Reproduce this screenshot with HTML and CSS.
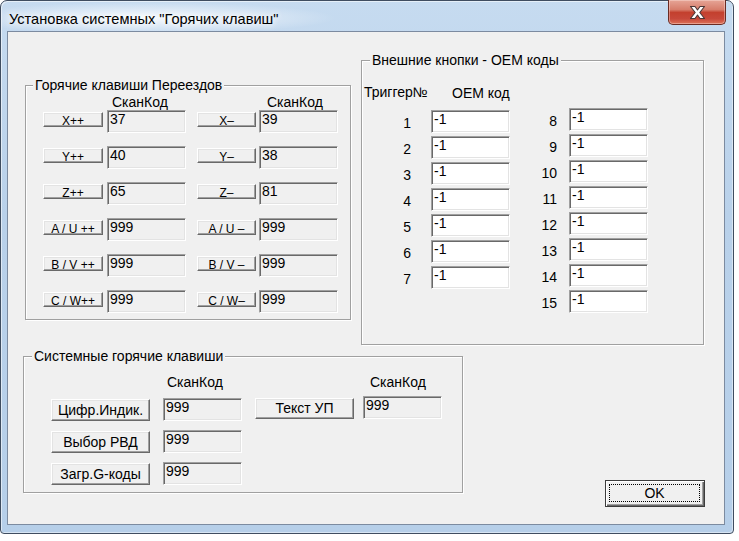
FILE: index.html
```html
<!DOCTYPE html>
<html lang="ru">
<head>
<meta charset="utf-8">
<title>Установка системных "Горячих клавиш"</title>
<link rel="stylesheet" href="styles.css">
</head>
<body>
<div class="window">
  <div class="titlebar">
    <span class="title">Установка системных "Горячих клавиш"</span>
    <div class="close">
      <svg width="17" height="15" viewBox="0 0 17 15">
        <path d="M1.5,1.5 L6,1.5 L8.5,5 L11,1.5 L15.5,1.5 L10.8,7.5 L15.5,13.5 L11,13.5 L8.5,10 L6,13.5 L1.5,13.5 L6.2,7.5 Z" fill="#ffffff" stroke="#4a3636" stroke-width="1.1" stroke-linejoin="round"/>
      </svg>
    </div>
  </div>
  <div class="client">
    <div class="top">
      <div class="group g1">
        <div class="legend"><span>Горячие клавиши Переездов</span></div>
        <div class="g1-head"><span class="g1-h1">СканКод</span><span>СканКод</span></div>
        <div class="g1-rows">
          <div class="g1-row"><div class="btn sbtn b1">X++</div><div class="field f1">37</div><div class="btn sbtn b2">X–</div><div class="field f2">39</div></div>
          <div class="g1-row"><div class="btn sbtn b1">Y++</div><div class="field f1">40</div><div class="btn sbtn b2">Y–</div><div class="field f2">38</div></div>
          <div class="g1-row"><div class="btn sbtn b1">Z++</div><div class="field f1">65</div><div class="btn sbtn b2">Z–</div><div class="field f2">81</div></div>
          <div class="g1-row"><div class="btn sbtn b1">A / U ++</div><div class="field f1">999</div><div class="btn sbtn b2">A / U –</div><div class="field f2">999</div></div>
          <div class="g1-row"><div class="btn sbtn b1">B / V ++</div><div class="field f1">999</div><div class="btn sbtn b2">B / V –</div><div class="field f2">999</div></div>
          <div class="g1-row"><div class="btn sbtn b1">C / W++</div><div class="field f1">999</div><div class="btn sbtn b2">C / W–</div><div class="field f2">999</div></div>
        </div>
      </div>
      <div class="group g2">
        <div class="legend"><span>Внешние кнопки - ОЕМ коды</span></div>
        <div class="g2-head"><span class="g2-h1">Триггер№</span><span class="g2-h2">ОЕМ код</span></div>
        <div class="g2-cols">
          <div class="g2-col g2-left">
            <div class="g2-row"><span class="num nl">1</span><div class="field white">-1</div></div>
            <div class="g2-row"><span class="num nl">2</span><div class="field white">-1</div></div>
            <div class="g2-row"><span class="num nl">3</span><div class="field white">-1</div></div>
            <div class="g2-row"><span class="num nl">4</span><div class="field white">-1</div></div>
            <div class="g2-row"><span class="num nl">5</span><div class="field white">-1</div></div>
            <div class="g2-row"><span class="num nl">6</span><div class="field white">-1</div></div>
            <div class="g2-row"><span class="num nl">7</span><div class="field white">-1</div></div>
          </div>
          <div class="g2-col g2-right">
            <div class="g2-row"><span class="num nr">8</span><div class="field white">-1</div></div>
            <div class="g2-row"><span class="num nr">9</span><div class="field white">-1</div></div>
            <div class="g2-row"><span class="num nr">10</span><div class="field white">-1</div></div>
            <div class="g2-row"><span class="num nr">11</span><div class="field white">-1</div></div>
            <div class="g2-row"><span class="num nr">12</span><div class="field white">-1</div></div>
            <div class="g2-row"><span class="num nr">13</span><div class="field white">-1</div></div>
            <div class="g2-row"><span class="num nr">14</span><div class="field white">-1</div></div>
            <div class="g2-row"><span class="num nr">15</span><div class="field white">-1</div></div>
          </div>
        </div>
      </div>
    </div>
    <div class="bottom">
      <div class="group g3">
        <div class="legend"><span>Системные горячие клавиши</span></div>
        <div class="g3-body">
          <div class="g3-col g3-left">
            <div class="g3-head">СканКод</div>
            <div class="g3-rows">
              <div class="g3-row"><div class="btn lbtn">Цифр.Индик.</div><div class="field g3f">999</div></div>
              <div class="g3-row"><div class="btn lbtn">Выбор РВД</div><div class="field g3f">999</div></div>
              <div class="g3-row"><div class="btn lbtn">Загр.G-коды</div><div class="field g3f">999</div></div>
            </div>
          </div>
          <div class="g3-col g3-right">
            <div class="g3-head">СканКод</div>
            <div class="g3-rows">
              <div class="g3-row"><div class="btn lbtn tbtn">Текст УП</div><div class="field g3f2">999</div></div>
            </div>
          </div>
        </div>
      </div>
      <div class="ok"><span class="ok-focus">OK</span></div>
    </div>
  </div>
</div>
</body>
</html>
```
FILE: styles.css
```css
* { box-sizing: border-box; }
html, body { margin: 0; padding: 0; background: #ffffff; }
body {
  width: 739px; height: 541px; overflow: hidden;
  font-family: "Liberation Sans", Arial, sans-serif;
  font-size: 14px; color: #000;
}
.window {
  width: 734px; height: 534px;
  border: 1px solid #3f4d60;
  border-radius: 7px 7px 4px 4px;
  background: linear-gradient(180deg, #c6dbf0 0%, #b9d1ea 40%, #b6cfe9 100%);
  box-shadow: inset 1px 1px 0 rgba(255,255,255,0.55), inset -1px -1px 0 rgba(255,255,255,0.45);
  display: flex; flex-direction: column;
}
.titlebar {
  height: 30px; flex: none;
  display: flex; justify-content: space-between; align-items: flex-start;
  padding: 0 7px 0 8px;
  background: radial-gradient(ellipse 190px 16px at 145px 17px, rgba(255,255,255,0.85), rgba(255,255,255,0));
}
.title {
  font-size: 14.6px; line-height: 20px; margin-top: 8px;
  text-shadow: 0 0 6px #fff, 0 0 10px #fff;
}
.close {
  width: 58px; height: 25px; margin-top: -1px;
  border: 1px solid #6a2b22; border-top-width: 0;
  border-radius: 0 0 5px 5px;
  background: linear-gradient(180deg, #e6a597 0%, #d77d6b 40%, #c3402e 52%, #c7483a 78%, #dd7358 100%);
  box-shadow: inset 0 0 0 1px rgba(255,230,225,0.4);
  display: flex; align-items: center; justify-content: center;
  padding-top: 1px;
}
.close svg { display: block; }
.client {
  flex: 1;
  margin: 0 8px 8px 6px;
  border: 1px solid #7c8ba0;
  background: #f0f0f0;
  display: flex; flex-direction: column;
}
.top { display: flex; align-items: flex-start; }
.bottom { display: flex; align-items: flex-start; margin-top: 11px; }

.group {
  border: 1px solid #a0a0a0;
  box-shadow: inset 1px 1px 0 #fff, 1px 1px 0 #fff;
}
.legend { height: 16px; margin-top: -9px; line-height: 16px; white-space: nowrap; }
.legend span { background: #f0f0f0; padding: 0 2px; margin-left: 8px; }

.field {
  height: 23px; width: 79px; flex: none;
  border: 1px solid; border-color: #a0a0a0 #ffffff #ffffff #a0a0a0;
  box-shadow: inset 1px 1px 0 #696969, inset -1px -1px 0 #e3e3e3;
  background: #f0f0f0;
  padding: 0 0 0 2px; line-height: 16px;
}
.field.white { background: #ffffff; }

.btn {
  flex: none; text-align: center; white-space: nowrap;
  background: #f0f0f0;
  border: 1px solid; border-color: #ffffff #696969 #696969 #ffffff;
  box-shadow: inset -1px -1px 0 #a0a0a0, inset 1px 1px 0 #e3e3e3;
}

/* Group 1 */
.g1 { width: 326px; height: 235px; margin: 53px 0 0 17px; }
.g1 .legend span { margin-left: 7px; }
.g1-head { margin-top: 1px; height: 16px; line-height: 16px; display: flex; }
.g1-h1 { margin-left: 86px; width: 155px; }
.g1-rows { display: flex; flex-direction: column; gap: 13px; }
.g1-row { display: flex; align-items: flex-start; padding-left: 17px; }
.sbtn { height: 15px; margin-top: 2px; font-size: 12px; line-height: 12px; padding-top: 2px; }
.b1 { width: 60px; }
.f1 { margin-left: 4px; }
.b2 { width: 59px; margin-left: 11px; }
.f2 { margin-left: 3px; }

/* Group 2 */
.g2 { width: 343px; height: 285px; margin: 28px 0 0 10px; }
.g2-head { margin-top: 16px; height: 16px; line-height: 16px; display: flex; align-items: flex-start; padding-left: 2px; }
.g2-h1 { width: 88px; }
.g2-h2 { padding-top: 1px; }
.g2-cols { display: flex; align-items: flex-start; }
.g2-col { display: flex; flex-direction: column; gap: 3px; }
.g2-left { margin-top: 10px; }
.g2-right { margin-top: 8px; margin-left: 17px; }
.g2-row { display: flex; align-items: center; }
.num { text-align: right; line-height: 16px; padding-top: 2px; }
.nl { width: 49px; margin-right: 20px; }
.nr { width: 30px; margin-right: 12px; }

/* Group 3 */
.g3 { width: 440px; height: 137px; margin-left: 15px; }
.g3-body { display: flex; align-items: flex-start; margin-top: 10px; }
.g3-left { padding-left: 27px; }
.g3-right { margin-left: 13px; }
.g3-head { height: 16px; line-height: 16px; }
.g3-left .g3-head { margin-left: 116px; }
.g3-right .g3-head { margin-left: 115px; }
.g3-rows { display: flex; flex-direction: column; gap: 9px; margin-top: 8px; }
.g3-right .g3-rows { margin-top: 6px; }
.g3-row { display: flex; align-items: flex-start; }
.lbtn { width: 99px; height: 22px; margin-top: 1px; line-height: 20px; }
.tbtn { height: 21px; margin-top: 2px; line-height: 19px; }
.g3f { margin-left: 13px; }
.g3f2 { margin-left: 9px; }

/* OK button */
.ok {
  width: 100px; height: 27px; margin: 124px 0 0 142px;
  border: 1px solid #3c3c3c;
  background: #f0f0f0;
  box-shadow: inset 1px 1px 0 #ffffff, inset -1px -1px 0 #696969, inset -2px -2px 0 #a0a0a0;
  display: flex; padding: 3px 4px 4px 3px;
}
.ok-focus {
  flex: 1; border: 1px dotted #000;
  text-align: center; line-height: 17px;
}
```
